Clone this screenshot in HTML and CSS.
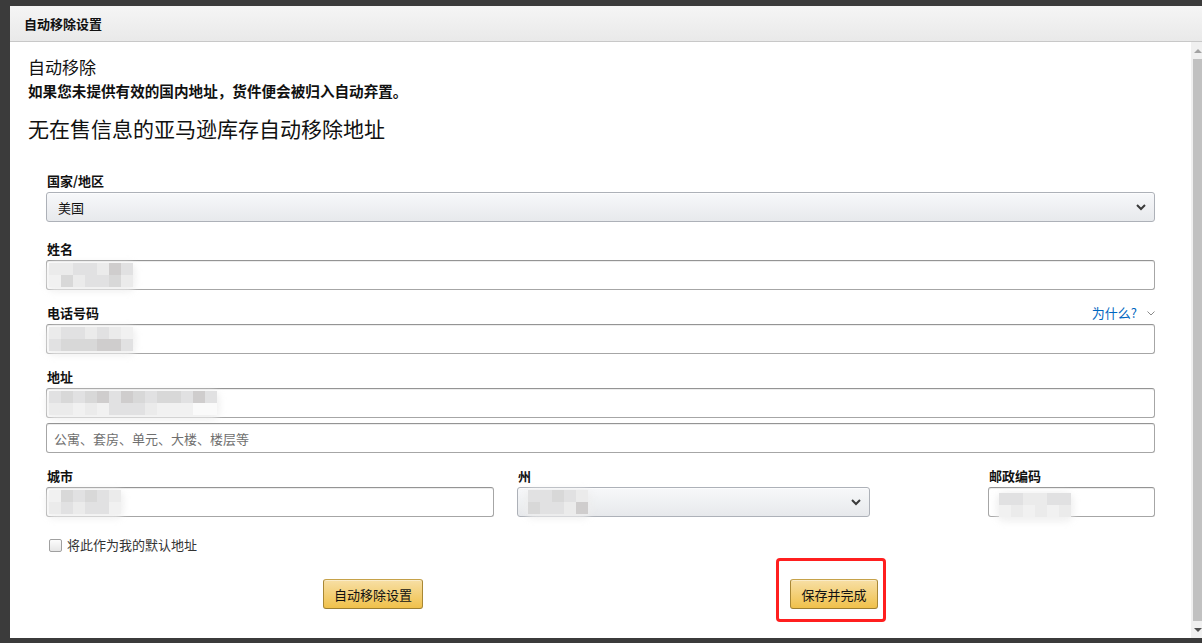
FILE: index.html
```html
<!DOCTYPE html>
<html lang="zh-CN">
<head>
<meta charset="utf-8">
<title>自动移除设置</title>
<link rel="stylesheet" href="styles.css">
</head>
<body>
<div class="page">
  <div class="modal">
    <div class="modal-head">自动移除设置</div>
    <div class="modal-main">
      <div class="content">
        <div class="h-small">自动移除</div>
        <div class="note">如果您未提供有效的国内地址，货件便会被归入自动弃置。</div>
        <h1 class="h-big">无在售信息的亚马逊库存自动移除地址</h1>

        <div class="form">
          <div class="group group-select">
            <div class="label">国家/地区</div>
            <div class="select">
              <span class="select-text">美国</span>
              <svg class="chev" width="10" height="7" viewBox="0 0 10 7"><path d="M1 1 L5 5 L9 1" fill="none" stroke="#3a3a3a" stroke-width="2"/></svg>
            </div>
          </div>

          <div class="group">
            <div class="label">姓名</div>
            <div class="input">
              <div class="redact cols7">
                <span class="a"></span><span class="a"></span><span class="b"></span><span class="b"></span><span class="a"></span><span class="e"></span><span class="b"></span>
                <span class="d"></span><span class="c"></span><span class="a"></span><span class="b"></span><span class="b"></span><span class="c"></span><span class="a"></span>
              </div>
            </div>
          </div>

          <div class="group">
            <div class="label-row">
              <div class="label">电话号码</div>
              <div class="why"><span class="why-link">为什么?</span>
                <svg width="8" height="5" viewBox="0 0 8 5"><path d="M0.5 0.5 L4 4 L7.5 0.5" fill="none" stroke="#8a8a8a" stroke-width="1"/></svg>
              </div>
            </div>
            <div class="input">
              <div class="redact cols7">
                <span class="a"></span><span class="b"></span><span class="b"></span><span class="a"></span><span class="b"></span><span class="a"></span><span class="d"></span>
                <span class="b"></span><span class="c"></span><span class="c"></span><span class="c"></span><span class="e"></span><span class="e"></span><span class="b"></span>
              </div>
            </div>
          </div>

          <div class="group">
            <div class="label">地址</div>
            <div class="input">
              <div class="redact cols14">
                <span class="b"></span><span class="c"></span><span class="b"></span><span class="c"></span><span class="e"></span><span class="b"></span><span class="e"></span><span class="c"></span><span class="b"></span><span class="c"></span><span class="c"></span><span class="b"></span><span class="e"></span><span class="b"></span>
                <span class="a"></span><span class="a"></span><span class="d"></span><span class="a"></span><span class="d"></span><span class="b"></span><span class="b"></span><span class="b"></span><span class="a"></span><span class="d"></span><span class="d"></span><span class="d"></span><span class="w"></span><span class="w"></span>
              </div>
            </div>
            <div class="input input-second">
              <span class="placeholder">公寓、套房、单元、大楼、楼层等</span>
            </div>
          </div>

          <div class="row3">
            <div class="group">
              <div class="label">城市</div>
              <div class="input">
                <div class="redact cols6">
                  <span class="d"></span><span class="c"></span><span class="b"></span><span class="c"></span><span class="b"></span><span class="a"></span>
                  <span class="a"></span><span class="b"></span><span class="a"></span><span class="b"></span><span class="b"></span><span class="d"></span>
                </div>
              </div>
            </div>
            <div class="group">
              <div class="label">州</div>
              <div class="select select-state">
                <div class="redact cols5">
                  <span class="b"></span><span class="b"></span><span class="c"></span><span class="b"></span><span class="a"></span>
                  <span class="c"></span><span class="b"></span><span class="b"></span><span class="a"></span><span class="e"></span>
                </div>
                <svg class="chev" width="10" height="7" viewBox="0 0 10 7"><path d="M1 1 L5 5 L9 1" fill="none" stroke="#3a3a3a" stroke-width="2"/></svg>
              </div>
            </div>
            <div class="group group-zip">
              <div class="label">邮政编码</div>
              <div class="input">
                <div class="redact cols6 redact-zip">
                  <span class="b"></span><span class="b"></span><span class="a"></span><span class="a"></span><span class="b"></span><span class="b"></span>
                  <span class="d"></span><span class="a"></span><span class="d"></span><span class="a"></span><span class="d"></span><span class="a"></span>
                </div>
              </div>
            </div>
          </div>

          <label class="check-row">
            <input type="checkbox" class="check">
            <span>将此作为我的默认地址</span>
          </label>

          <div class="btn-row">
            <button class="btn btn-settings">自动移除设置</button>
            <div class="highlight">
              <button class="btn btn-save">保存并完成</button>
            </div>
          </div>
        </div>
      </div>
      <div class="scrollbar">
        <div class="arrow arrow-up"></div>
        <div class="track"><div class="thumb"></div></div>
        <div class="arrow arrow-down"></div>
      </div>
    </div>
  </div>
</div>
</body>
</html>
```

FILE: styles.css
```css
* { box-sizing: border-box; }

html, body {
  margin: 0;
  padding: 0;
  width: 1202px;
  height: 643px;
  overflow: hidden;
  background: #3b3b3b;
  font-family: "Noto Sans CJK SC", "Noto Sans", sans-serif;
  color: #111;
}

.page {
  padding: 6px 0 0 10px;
}

.modal {
  width: 1192px;
  height: 632px;
  background: #fff;
  display: flex;
  flex-direction: column;
}

.modal-head {
  height: 36px;
  padding-left: 14px;
  line-height: 35px;
  font-size: 13px;
  font-weight: bold;
  color: #111;
  background: linear-gradient(#f5f5f5, #e9e9e9);
  border-bottom: 1px solid #c8c8c8;
}

.modal-main {
  flex: 1;
  display: flex;
  min-height: 0;
}

.content {
  flex: 1;
  padding: 14px 36px 0 18px;
}

.h-small {
  font-size: 17px;
  line-height: 22px;
  color: #111;
}

.note {
  margin-top: 4px;
  font-size: 14.6px;
  line-height: 18px;
  font-weight: bold;
  color: #111;
}

.h-big {
  margin: 14px 0 0;
  font-size: 21px;
  line-height: 28px;
  font-weight: normal;
  color: #111;
}

.form {
  margin: 30px 0 0 18px;
}

.group {
  margin-top: 14px;
}

.group-select {
  margin-top: 0;
  margin-bottom: 18px;
}

.label {
  font-size: 13px;
  line-height: 18px;
  font-weight: bold;
  color: #111;
  padding-left: 1px;
  margin-bottom: 2px;
}

.label-row {
  display: flex;
  justify-content: space-between;
  align-items: flex-start;
}

.why {
  display: flex;
  align-items: center;
  gap: 10px;
  font-size: 13px;
  line-height: 18px;
}

.why-link {
  color: #0066c0;
}

.select {
  height: 30px;
  border: 1px solid #adb1b8;
  border-radius: 3px;
  background: linear-gradient(#f7f8fa, #e7e9ec);
  box-shadow: 0 1px 0 rgba(255,255,255,.6) inset;
  display: flex;
  align-items: center;
  justify-content: space-between;
  padding: 0 8px 0 11px;
}

.select-text {
  font-size: 13px;
  color: #111;
}

.chev { display: block; }

.input {
  height: 30px;
  border: 1px solid #a6a6a6;
  border-top-color: #949494;
  border-radius: 3px;
  background: #fff;
  box-shadow: 0 1px 0 rgba(0,0,0,.07) inset;
  padding: 2px 0 0 2px;
}

.input-second {
  margin-top: 5px;
  padding: 0 0 0 7px;
  display: flex;
  align-items: center;
}

.placeholder {
  font-size: 13px;
  color: #6f6f6f;
}

.redact {
  display: grid;
  grid-auto-rows: 12px;
  width: max-content;
  box-shadow: 0 2px 6px 3px rgba(238,238,238,.8);
  border-radius: 6px;
}
.cols5 { grid-template-columns: repeat(5, 12px); }
.cols6 { grid-template-columns: repeat(6, 12px); }
.cols7 { grid-template-columns: repeat(7, 12px); }
.cols14 { grid-template-columns: repeat(14, 12px); }

.redact .a { background: #ebebeb; }
.redact .b { background: #e1e1e2; }
.redact .c { background: #d8d8d8; }
.redact .d { background: #f1f1f1; }
.redact .e { background: #cfcdcd; }
.redact .w { background: #fafafa; }

.select-state {
  padding-left: 10px;
}

.redact-zip {
  margin-left: 8px;
  margin-top: 3px;
}

.row3 {
  display: grid;
  grid-template-columns: 448px 353px 1fr;
  column-gap: 23px;
}

.group-zip {
  justify-self: end;
  width: 167px;
}

.check-row {
  display: flex;
  align-items: center;
  gap: 5px;
  margin-top: 19px;
  padding-left: 3px;
  font-size: 13px;
  line-height: 18px;
  color: #333;
}

.check {
  appearance: none;
  -webkit-appearance: none;
  margin: 0;
  width: 13px;
  height: 13px;
  border: 1px solid #a0a0a0;
  border-radius: 2px;
  background: linear-gradient(#fcfcfc, #e6e6e6);
}

.btn-row {
  display: flex;
  margin-top: 25px;
}

.btn {
  height: 30px;
  border: 1px solid #a88734;
  border-color: #c6a24a #a88734 #9c7e31;
  border-radius: 3px;
  background: linear-gradient(#f7dfa5, #f0c14b);
  font-family: "Noto Sans CJK SC", sans-serif;
  font-size: 13px;
  color: #111;
  padding: 0;
  text-align: center;
  box-shadow: 0 1px 0 rgba(255,255,255,.4) inset;
}

.btn-settings {
  width: 100px;
  margin-left: 277px;
}

.highlight {
  position: relative;
  margin-left: 367px;
}

.btn-save {
  width: 88px;
  display: block;
}

.highlight::after {
  content: "";
  position: absolute;
  top: -21px;
  left: -14px;
  right: -8px;
  bottom: -13px;
  border: 3px solid #ff1f1f;
  border-radius: 4px;
}

.scrollbar {
  width: 11px;
  background: #f0f0f0;
  display: flex;
  flex-direction: column;
}

.arrow {
  height: 17px;
  display: flex;
  align-items: center;
  justify-content: center;
}

.arrow-up::before {
  content: "";
  border-left: 4px solid transparent;
  border-right: 4px solid transparent;
  border-bottom: 4px solid #a3a3a3;
  margin-left: 2px;
}

.arrow-down::before {
  content: "";
  border-left: 4px solid transparent;
  border-right: 4px solid transparent;
  border-top: 4px solid #505050;
  margin-left: 2px;
}

.track {
  flex: 1;
  padding-left: 2px;
  display: flex;
}

.thumb {
  flex: 1;
  background: #c1c1c1;
}
```
